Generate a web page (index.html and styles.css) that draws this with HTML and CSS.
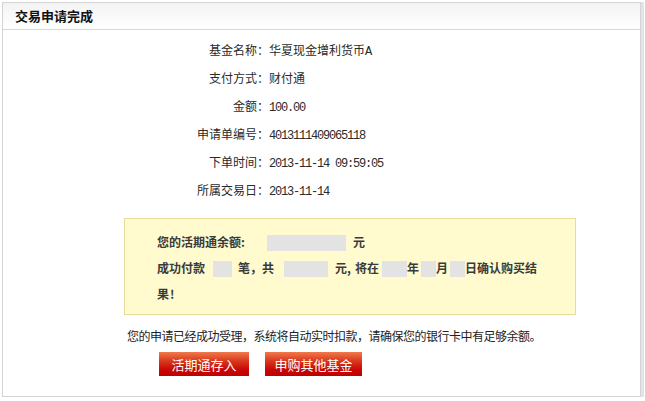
FILE: index.html
```html
<!DOCTYPE html>
<html lang="zh-CN">
<head>
<meta charset="utf-8">
<title>交易申请完成</title>
<link rel="stylesheet" href="styles.css">
</head>
<body>
<div class="page">
  <div class="frame">
    <div class="head"><h2 class="title">交易申请完成</h2></div>
    <div class="content">
      <dl class="info">
        <dt>基金名称：</dt><dd>华夏现金增利货币<span class="num">A</span></dd>
        <dt>支付方式：</dt><dd>财付通</dd>
        <dt>金额：</dt><dd><span class="num">100.00</span></dd>
        <dt>申请单编号：</dt><dd><span class="num">4013111409065118</span></dd>
        <dt>下单时间：</dt><dd><span class="num">2013-11-14 09:59:05</span></dd>
        <dt>所属交易日：</dt><dd><span class="num">2013-11-14</span></dd>
      </dl>
      <div class="notice">
        <p class="line">您的活期通余额<span class="half">:</span><span class="blank b1"></span><span class="unit">元</span></p>
        <p class="line"><span>成功付款</span><span class="blank b2"></span><span class="m6">笔</span><span class="comma">，</span><span>共</span><span class="blank b3"></span><span class="m7">元</span><span class="half">,</span><span class="m2">将在</span><span class="blank b4"></span><span>年</span><span class="blank b5"></span><span>月</span><span class="blank b5"></span><span>日确认购买结</span><span>果<span class="bang">!</span></span></p>
      </div>
      <p class="msg">您的申请已经成功受理，系统将自动实时扣款，请确保您的银行卡中有足够余额。</p>
      <div class="actions">
        <a class="btn btn-a" href="#">活期通存入</a>
        <a class="btn btn-b" href="#">申购其他基金</a>
      </div>
    </div>
  </div>
  <div class="edge"></div>
</div>
</body>
</html>
```

FILE: styles.css
```css
html, body {
  margin: 0;
  padding: 0;
  background: #ffffff;
}
body {
  font-family: "Noto Sans CJK SC", "Liberation Sans", sans-serif;
  font-size: 12px;
  color: #333333;
}
.page {
  display: flex;
  padding: 2px 0 0 2px;
}
.frame {
  width: 637px;
  height: 393px;
  border: 1px solid #d4d4d4;
  display: flex;
  flex-direction: column;
}
.edge {
  width: 3px;
  height: 395px;
  background: #e4e4e4;
}
.head {
  height: 26px;
  border-bottom: 1px solid #d8d8d8;
  background: linear-gradient(#f3f3f3, #fafafa 60%, #ffffff);
  display: flex;
  align-items: center;
  padding-left: 12px;
}
.title {
  margin: 0;
  font-size: 13px;
  font-weight: bold;
  color: #111111;
  line-height: 16px;
}
.content {
  padding-top: 6px;
}
.info {
  margin: 0 0 0 126px;
  display: grid;
  grid-template-columns: 140px auto;
  grid-auto-rows: 28px;
  align-items: center;
  line-height: 18px;
  color: #2a2a2a;
}
.info dt {
  text-align: right;
  margin: 0;
}
.info dd {
  margin: 0;
}
.num {
  font-family: "Liberation Mono", monospace;
  font-size: 12px;
  letter-spacing: -1.2px;
  line-height: 1;
}
.notice {
  margin: 14px 0 0 121px;
  width: 452px;
  height: 97px;
  background: #fffbcf;
  border: 1px solid #e6dd9a;
  box-sizing: border-box;
  padding: 10px 30px 0 32px;
  font-weight: bold;
  color: #3a3a3a;
}
.line {
  margin: 0;
  line-height: 26px;
}
.half {
  display: inline-block;
  width: 6px;
}
.blank {
  display: inline-block;
  vertical-align: -4px;
  background: #e3e3e3;
  height: 16px;
}
.b1 { width: 79px; margin-left: 20px; }
.unit { margin-left: 7px; }
.b2 { width: 19px; margin-left: 8px; }
.m6 { margin-left: 6px; }
.comma { display: inline-block; width: 12px; }
.b3 { width: 44px; margin-left: 10px; }
.m7 { margin-left: 7px; }
.m2 { margin-left: 2px; }
.b4 { width: 25px; margin-left: 3px; }
.b5 { width: 15px; margin-left: 2px; }
.bang { margin-left: 1px; }
.msg {
  margin: 11px 0 0 124px;
  line-height: 20px;
  color: #222222;
  letter-spacing: -0.5px;
}
.actions {
  display: flex;
  gap: 16px;
  margin: 6px 0 0 156px;
}
.btn {
  display: flex;
  align-items: center;
  justify-content: center;
  height: 24px;
  color: #ffffff;
  text-decoration: none;
  font-size: 13px;
  background: linear-gradient(#f07a4c, #d8341a 40%, #c80606 75%, #bf0000);
}
.btn-a { width: 90px; }
.btn-b { width: 97px; }
```
